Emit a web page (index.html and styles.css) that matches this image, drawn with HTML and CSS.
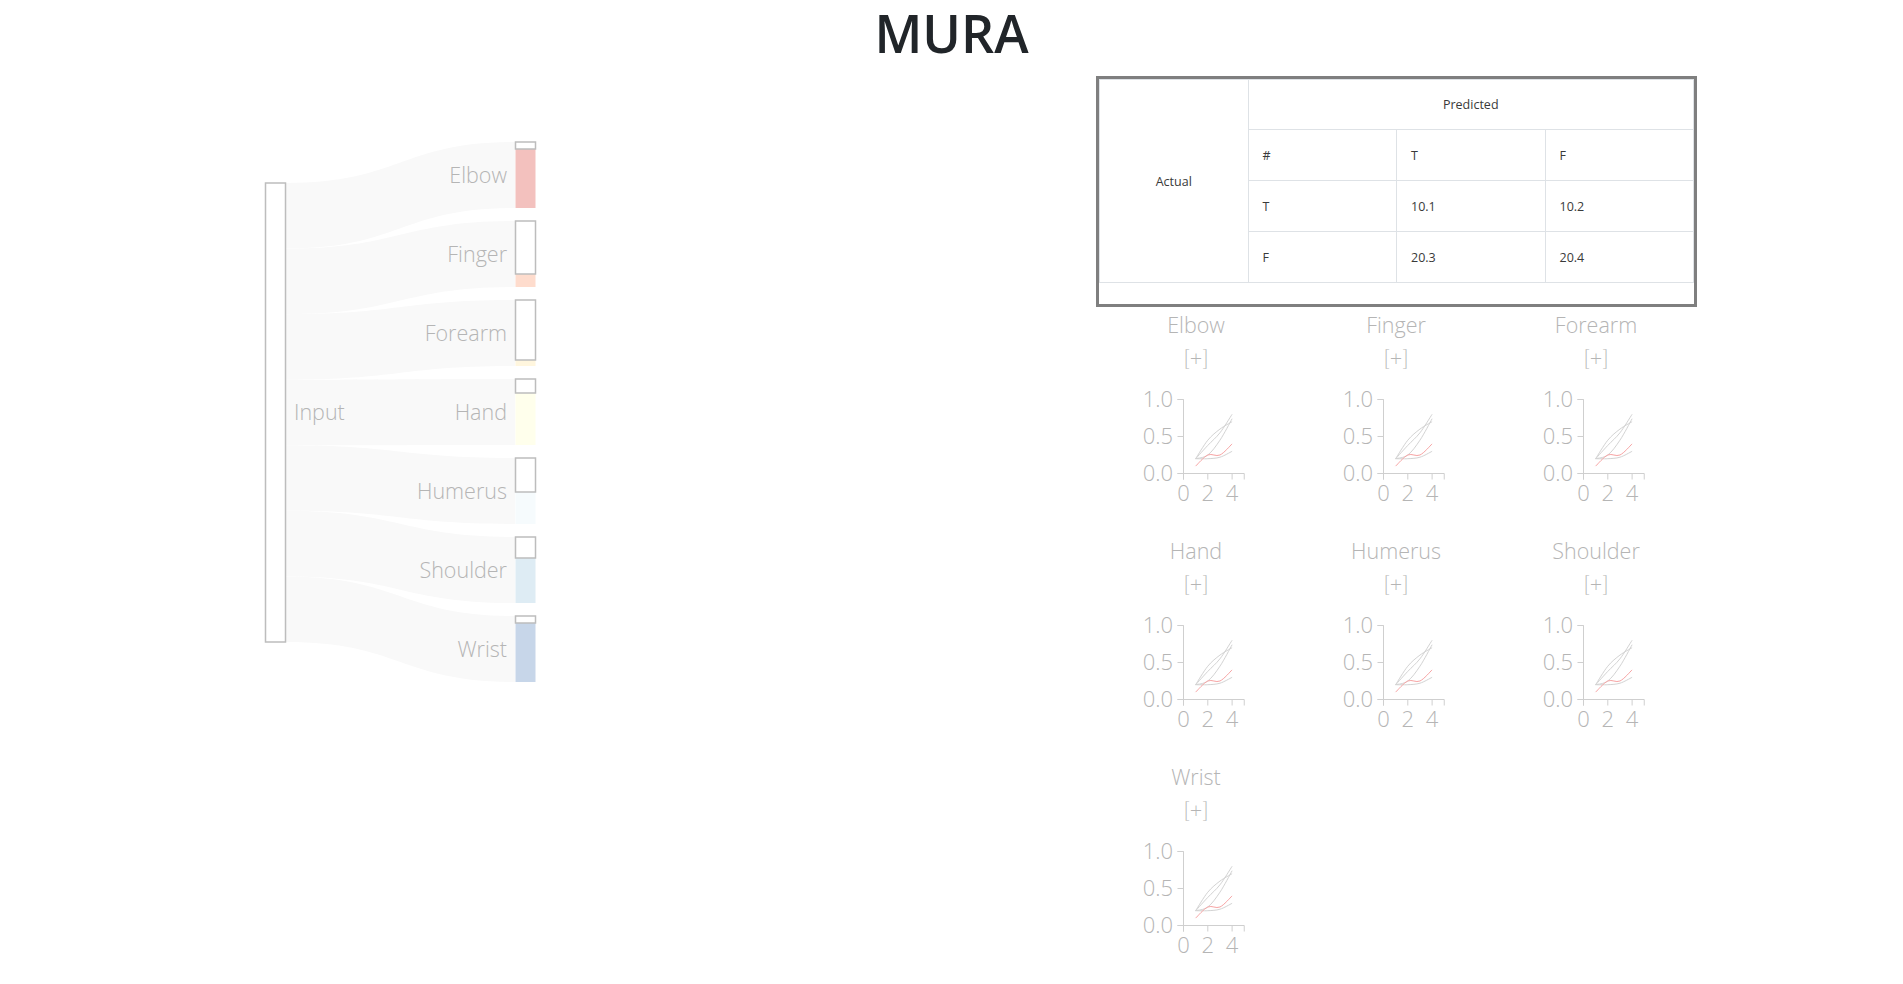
FILE: index.html
```html
<!DOCTYPE html>
<html>
	<head>
		<meta charset="utf-8">
		<title>MURA</title>
		<link rel="stylesheet" href="styles.css">
	</head>
	<body>
		<h1 class="title">MURA</h1>
		<div class="main">
			<svg class="sankey" id="sankey" width="1096" height="660"></svg>
			<div class="side">
				<div class="matrix-frame">
					<table class="matrix">
						<tr class="row-head">
							<td rowspan="4" class="actual">Actual</td>
							<td colspan="3" class="predicted">Predicted</td>
						</tr>
						<tr><td>#</td><td>T</td><td>F</td></tr>
						<tr><td>T</td><td>10.1</td><td>10.2</td></tr>
						<tr><td>F</td><td>20.3</td><td>20.4</td></tr>
						<tr class="row-foot"><td colspan="4"></td></tr>
					</table>
				</div>
				<div class="multiples" id="multiples"></div>
			</div>
		</div>
		<script type="text/javascript">
			var ns = "http://www.w3.org/2000/svg";
			var names = ["Elbow", "Finger", "Forearm", "Hand", "Humerus", "Shoulder", "Wrist"];
			var colors = ["#f3c1be", "#fedccd", "#fff6de", "#ffffec", "#f6fbfd", "#deecf4", "#c7d6e9"];
			var boxes = [7, 53, 60, 14, 34, 21, 7]; // unknown part of every node

			function el(tag, attrs, parent){
				var e = document.createElementNS(ns, tag);
				for(var k in attrs) e.setAttribute(k, attrs[k]);
				parent.appendChild(e);
				return e;
			}

			// sankey
			var svg = document.getElementById("sankey");
			var srcTop = 119, srcH = 459, slice = srcH / names.length;
			var x0 = 286, x1 = 515, xm = (x0 + x1) / 2;
			for(var i = 0; i < names.length; i++){
				var s0 = srcTop + i * slice, s1 = s0 + slice;
				var t0 = 78 + i * 79, t1 = t0 + 66;
				el("path", {
					"class": "link",
					d: "M" + x0 + "," + s0 + "C" + xm + "," + s0 + " " + xm + "," + t0 + " " + x1 + "," + t0 +
						"L" + x1 + "," + t1 + "C" + xm + "," + t1 + " " + xm + "," + s1 + " " + x0 + "," + s1 + "Z"
				}, svg);
			}
			el("rect", {"class": "node", x: 265.5, y: srcTop, width: 20, height: srcH}, svg);
			var input = el("text", {"class": "label", x: 294, y: srcTop + srcH / 2, dy: "0.35em"}, svg);
			input.textContent = "Input";
			for(var i = 0; i < names.length; i++){
				var t0 = 78 + i * 79;
				el("rect", {x: 515.5, y: t0, width: 20, height: 66, fill: colors[i]}, svg);
				el("rect", {"class": "node", x: 515.5, y: t0, width: 20, height: boxes[i]}, svg);
				var t = el("text", {"class": "label", x: 507, y: t0 + 33, dy: "0.35em", "text-anchor": "end"}, svg);
				t.textContent = names[i];
			}

			// small multiples
			var lines = [
				{c: "grey", v: [0.2, 0.45, 0.6, 0.7]},
				{c: "grey", v: [0.2, 0.38, 0.55, 0.8]},
				{c: "grey", v: [0.2, 0.25, 0.45, 0.74]},
				{c: "grey", v: [0.2, 0.2, 0.22, 0.3]},
				{c: "red", v: [0.1, 0.25, 0.25, 0.4]}
			];
			function sx(t){ return 87.5 + t * 12.15; }
			function sy(v){ return 103.5 - v * 74; }
			function curve(vals){
				var p = vals.map(function (v, i){ return [sx(i + 1), sy(v)]; });
				var d = "M" + p[0][0] + "," + p[0][1];
				for(var i = 0; i < p.length - 1; i++){
					var a = p[i - 1] || p[i], b = p[i], c = p[i + 1], n = p[i + 2] || c;
					d += "C" + (b[0] + (c[0] - a[0]) / 6).toFixed(2) + "," + (b[1] + (c[1] - a[1]) / 6).toFixed(2) + " " +
						(c[0] - (n[0] - b[0]) / 6).toFixed(2) + "," + (c[1] - (n[1] - b[1]) / 6).toFixed(2) + " " +
						c[0] + "," + c[1];
				}
				return d;
			}
			var chart = '<svg class="sm-chart" width="200" height="166">';
			chart += '<path class="domain" d="M81.5,29.5H87.5V103.5H81.5"/>';
			[1, 0.5, 0].forEach(function (v){
				chart += '<line class="tick" x1="81.5" x2="87.5" y1="' + sy(v) + '" y2="' + sy(v) + '"/>';
				chart += '<text class="tick-label" x="77" y="' + sy(v) + '" dy="0.34em" text-anchor="end">' + v.toFixed(1) + '</text>';
			});
			chart += '<path class="domain" d="M87.5,109.5V103.5H' + sx(5) + 'V109.5"/>';
			[0, 2, 4].forEach(function (t){
				chart += '<line class="tick" x1="' + sx(t) + '" x2="' + sx(t) + '" y1="103.5" y2="109.5"/>';
				chart += '<text class="tick-label" x="' + sx(t) + '" y="131" text-anchor="middle">' + t + '</text>';
			});
			lines.forEach(function (l){
				chart += '<path class="line ' + l.c + '" d="' + curve(l.v) + '"/>';
			});
			chart += '</svg>';

			var box = document.getElementById("multiples");
			names.forEach(function (name){
				var cell = document.createElement("div");
				cell.className = "sm";
				cell.innerHTML = '<div class="sm-name">' + name + '</div><div class="sm-toggle">[+]</div>' + chart;
				box.appendChild(cell);
			});
		</script>
	</body>
</html>
```

FILE: styles.css
```css
*{
	margin: 0;
	padding: 0;
}
body{
	font-family: "Open Sans", "Liberation Sans", sans-serif;
	color: #212529;
	background: #fff;
}
.title{
	font-size: 52px;
	font-weight: 600;
	line-height: 62px;
	padding-top: 2px;
	text-align: center;
}
.main{
	display: flex;
	align-items: flex-start;
	padding-bottom: 180px;
}
.sankey{
	display: block;
	flex: none;
}
.sankey .link{
	fill: #f9f9f9;
}
.sankey .node{
	fill: #fff;
	stroke: #bdbdbd;
	stroke-width: 1.5;
}
.sankey .label{
	font-size: 21.5px;
	font-weight: 300;
	fill: #b5b5b5;
}
.side{
	width: 601px;
	margin-top: 12px;
	flex: none;
}
.matrix-frame{
	border: 3px solid #7f7f7f;
}
.matrix{
	width: 100%;
	border-collapse: collapse;
	table-layout: fixed;
	font-size: 12.5px;
	color: #3a3a3a;
}
.matrix td{
	border: 1px solid #dee2e6;
	height: 50px;
	padding: 0 14px;
	vertical-align: middle;
}
.matrix .row-head td{
	height: 49px;
}
.matrix td.actual,
.matrix td.predicted{
	text-align: center;
}
.matrix .row-foot td{
	height: 21px;
	border-left: 0;
	border-right: 0;
	border-bottom: 0;
}
.multiples{
	display: grid;
	grid-template-columns: repeat(3, 200px);
	margin-top: 3px;
}
.sm{
	text-align: center;
}
.sm-name,
.sm-toggle{
	font-size: 21.5px;
	font-weight: 300;
	line-height: 30px;
	color: #b5b5b5;
}
.sm-toggle{
	padding-top: 3px;
	font-family: "Lato", "Open Sans", sans-serif;
}
.sm-chart{
	display: block;
	margin-top: -3px;
}
.sm-chart .domain,
.sm-chart .tick{
	fill: none;
	stroke: #cfcfcf;
	stroke-width: 1;
}
.sm-chart .tick-label{
	font-size: 22px;
	font-weight: 300;
	fill: #b5b5b5;
}
.sm-chart .line{
	fill: none;
	stroke-width: 1;
}
.sm-chart .grey{
	stroke: #d3d3d3;
}
.sm-chart .red{
	stroke: #f7a3a3;
}
```
